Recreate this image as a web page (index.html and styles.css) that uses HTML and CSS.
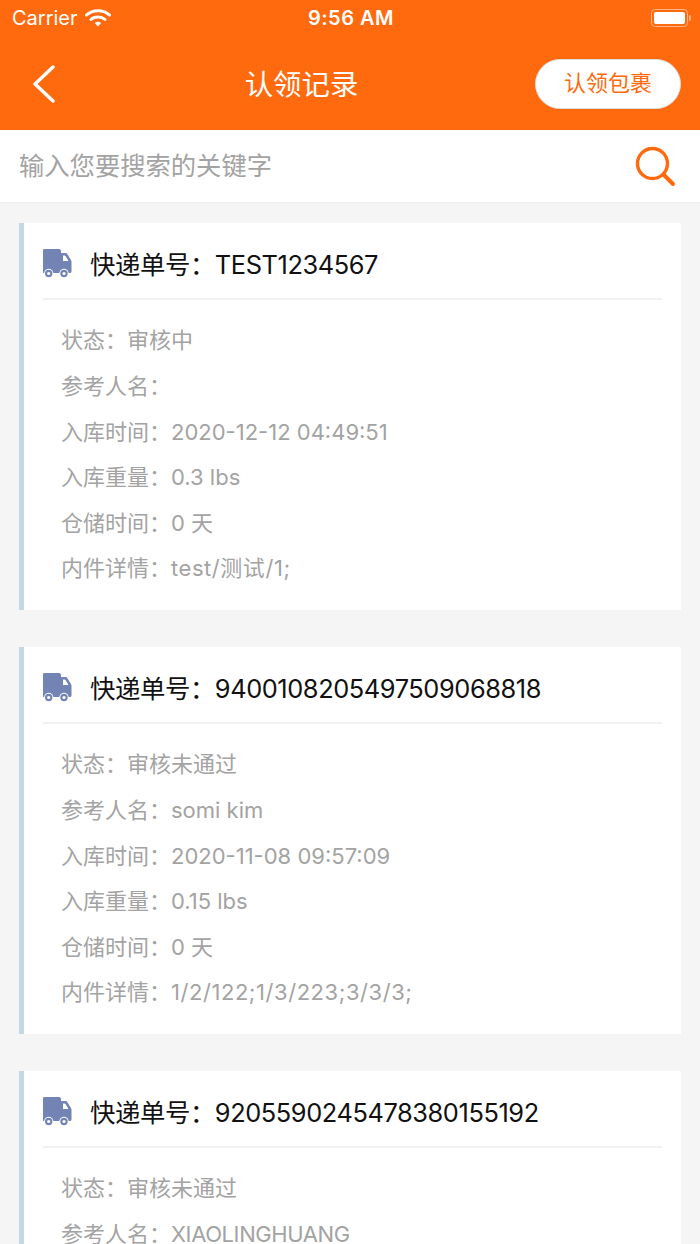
FILE: index.html
```html
<!DOCTYPE html>
<html lang="zh-CN">

<head>
    <meta charset="UTF-8">
    <meta name="viewport" content="width=device-width, initial-scale=1.0">
    <title>认领记录</title>
    <link rel="stylesheet" href="styles.css">
</head>

<body>
    <div class="header">
        <div class="status_bar">
            <div class="status_left">
                <span>Carrier</span>
                <svg width="26" height="20" viewBox="0 0 26 20">
                    <path d="M1.500 7C7.500 1.300 18.500 1.300 24.500 7" fill="none" stroke="#fff" stroke-width="3" stroke-linecap="round" />
                    <path d="M6 11.500C9.500 8.300 16.500 8.300 20 11.500" fill="none" stroke="#fff" stroke-width="3" stroke-linecap="round" />
                    <path d="M9.800 15C11.800 13.200 14.200 13.200 16.200 15L13 18.500Z" fill="#fff" />
                </svg>
            </div>
            <div class="status_time">9:56 AM</div>
            <div class="battery">
                <div class="battery_body">
                    <div class="battery_level"></div>
                </div>
                <div class="battery_tip"></div>
            </div>
        </div>
        <div class="nav_bar">
            <svg class="back_icon" width="24" height="38" viewBox="0 0 24 38">
                <path d="M21 2L3 19L21 36" fill="none" stroke="#fff" stroke-width="3.400" stroke-linecap="round" stroke-linejoin="round" />
            </svg>
            <div class="nav_title">认领记录</div>
            <button class="claim_button">认领包裹</button>
        </div>
    </div>

    <div class="search_bar">
        <span class="search_text">输入您要搜索的关键字</span>
        <svg width="42" height="42" viewBox="0 0 42 42">
            <circle cx="18.500" cy="18.500" r="15" fill="none" stroke="#ff6a0e" stroke-width="3.400" />
            <path d="M30 30L39 39" fill="none" stroke="#ff6a0e" stroke-width="4" stroke-linecap="round" />
        </svg>
    </div>

    <div class="record_list">
        <div class="record_card">
            <div class="record_head">
                <svg class="truck_icon" width="30" height="30" viewBox="0 0 30 30"><use href="#truck" /></svg>
                <span>快递单号：TEST1234567</span>
            </div>
            <div class="record_info">
                <div>状态：审核中</div>
                <div>参考人名：</div>
                <div>入库时间：2020-12-12 04:49:51</div>
                <div>入库重量：0.3 lbs</div>
                <div>仓储时间：0 天</div>
                <div>内件详情：<span class="detail_value">test/测试/1;</span></div>
            </div>
        </div>

        <div class="record_card">
            <div class="record_head">
                <svg class="truck_icon" width="30" height="30" viewBox="0 0 30 30"><use href="#truck" /></svg>
                <span>快递单号：9400108205497509068818</span>
            </div>
            <div class="record_info">
                <div>状态：审核未通过</div>
                <div>参考人名：somi kim</div>
                <div>入库时间：2020-11-08 09:57:09</div>
                <div>入库重量：0.15 lbs</div>
                <div>仓储时间：0 天</div>
                <div>内件详情：<span class="detail_value">1/2/122;1/3/223;3/3/3;</span></div>
            </div>
        </div>

        <div class="record_card">
            <div class="record_head">
                <svg class="truck_icon" width="30" height="30" viewBox="0 0 30 30"><use href="#truck" /></svg>
                <span>快递单号：9205590245478380155192</span>
            </div>
            <div class="record_info">
                <div>状态：审核未通过</div>
                <div>参考人名：<span class="upper_value">XIAOLINGHUANG</span></div>
            </div>
        </div>
    </div>

    <svg class="icon_defs" width="0" height="0">
        <defs>
            <g id="truck" transform="translate(-0.500 1)">
                <path fill="#7384b4" fill-rule="evenodd" d="M2 0H16.500a2 2 0 0 1 2 2V4H23c.8 0 1.400.3 1.800.9l3.500 5.800c.4.6.7 1.200.7 2V22.500a1.500 1.500 0 0 1-1.500 1.500H1.500A1.500 1.500 0 0 1 0 22.500V2A2 2 0 0 1 2 0ZM20.500 6.500V12H26L23 7C22.800 6.700 22.500 6.500 22.200 6.500Z" />
                <circle cx="6.200" cy="24.500" r="4.700" fill="#fff" />
                <circle cx="6.200" cy="24.500" r="3.700" fill="#7384b4" />
                <circle cx="6.200" cy="24.500" r="1.600" fill="#fff" />
                <circle cx="21.500" cy="24.500" r="4.700" fill="#fff" />
                <circle cx="21.500" cy="24.500" r="3.700" fill="#7384b4" />
                <circle cx="21.500" cy="24.500" r="1.600" fill="#fff" />
            </g>
        </defs>
    </svg>
</body>

</html>
```
FILE: styles.css
```css
html {
    height: 100%;
    overflow: hidden;
}

body {
    margin: 0;
    height: 100%;
    overflow: hidden;
    background-color: #f5f5f5;
    font-family: Inter, "Noto Sans CJK SC", sans-serif;
}

.header {
    height: 130px;
    background-color: #ff6a0e;
    color: #fff;
    display: flex;
    flex-direction: column;
}

.status_bar {
    height: 36px;
    padding: 0 9px 0 12px;
    display: grid;
    grid-template-columns: 1fr auto 1fr;
    align-items: center;
    font-size: 20px;
}

.status_left {
    display: flex;
    align-items: center;
    gap: 7px;
}

.status_time {
    margin-left: -1px;
    font-weight: 600;
    letter-spacing: 0.500px;
}

.battery {
    justify-self: end;
    display: flex;
    align-items: center;
    gap: 1px;
}

.battery_body {
    box-sizing: border-box;
    width: 37px;
    height: 18px;
    padding: 2px;
    border: 1px solid rgba(255, 255, 255, 0.5);
    border-radius: 4px;
}

.battery_level {
    height: 100%;
    background-color: #fff;
    border-radius: 2px;
}

.battery_tip {
    width: 2px;
    height: 6px;
    background-color: rgba(255, 255, 255, 0.5);
    border-radius: 0 2px 2px 0;
}

.nav_bar {
    flex: 1;
    padding: 0 19px 0 32px;
    display: flex;
    align-items: center;
}

.back_icon {
    margin-top: 1px;
}

.nav_title {
    flex: 1;
    margin: 3px 0 0 12px;
    text-align: center;
    font-size: 28.400px;
    line-height: 36px;
}

.claim_button {
    width: 146px;
    height: 50px;
    margin-top: 2px;
    padding: 0 0 6px;
    border: 1px solid #ddd;
    border-radius: 25px;
    background-color: #fff;
    color: #ff6a0e;
    font-family: inherit;
    font-size: 22px;
}

.search_bar {
    height: 73px;
    padding: 0 24px 0 19px;
    display: flex;
    align-items: center;
    justify-content: space-between;
    box-sizing: border-box;
    background-color: #fff;
    border-bottom: 1px solid #eee;
}

.search_text {
    margin-top: -4px;
    font-size: 25.300px;
    color: #a3a3a3;
}

.record_list {
    padding: 20px 19px;
    display: flex;
    flex-direction: column;
    gap: 37px;
}

.record_card {
    height: 387px;
    box-sizing: border-box;
    padding: 0 19px;
    background-color: #fff;
    border-left: 5px solid #c4d8e4;
    flex-shrink: 0;
}

.record_head {
    height: 77px;
    padding-top: 5px;
    box-sizing: border-box;
    display: flex;
    align-items: center;
    gap: 17px;
    border-bottom: 2px solid #f1f1f1;
    font-size: 25.400px;
    letter-spacing: -0.420px;
    color: #111;
}

.record_info {
    padding: 18.400px 0 0 18px;
    font-size: 22px;
    line-height: 45.600px;
    color: #a3a3a3;
}

.detail_value {
    letter-spacing: 0.550px;
}

.upper_value {
    letter-spacing: -0.400px;
}

.icon_defs {
    position: absolute;
}
```
